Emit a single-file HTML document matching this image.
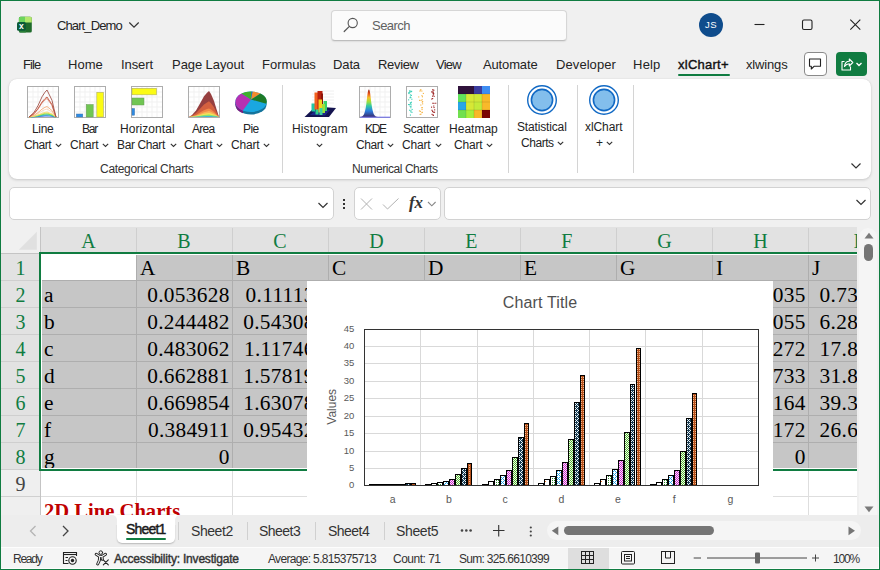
<!DOCTYPE html>
<html lang="en"><head><meta charset="utf-8"><title>Chart_Demo - Excel</title>
<style>
html,body{margin:0;padding:0}
body{width:880px;height:570px;overflow:hidden;background:#f0f0f0;font-family:"Liberation Sans",sans-serif;color:#242424}
#win{position:relative;width:880px;height:570px;overflow:hidden;background:#f0f0f0}
.t{position:absolute;white-space:nowrap}
.b{position:absolute;box-sizing:border-box}
svg{position:absolute;overflow:visible}

</style></head>
<body>
<div id="win">
<svg style="left:16px;top:16px" width="18" height="18" viewBox="0 0 18 18">
<rect x="2.900" y=".8" width="12.900" height="15.800" rx="1.600" fill="#1f6b2b"/>
<path d="M4.500 .8H9V6.400H2.900V2.400A1.600 1.600 0 0 1 4.500 .8Z" fill="#6cd45c"/>
<path d="M9 .8H14.200A1.600 1.600 0 0 1 15.800 2.400V6.400H9Z" fill="#b4e86e"/>
<path d="M2.900 13H9.800V16.600H4.500A1.600 1.600 0 0 1 2.900 15Z" fill="#2a8038"/>
<rect x="1" y="6" width="8.800" height="8.800" rx="1.500" fill="#0b5a38"/>
<text x="5.400" y="13.100" font-size="8.500" font-weight="700" fill="#fff" text-anchor="middle" font-family="Liberation Sans, sans-serif">x</text>
</svg>
<span id="t1" class="t " style="left:57.05px;top:19.00px;font-size:13px;line-height:13px;letter-spacing:-0.900px">Chart_Demo</span>
<svg style="left:128px;top:20px" width="12" height="10" viewBox="0 0 12 10"><path d="M1.300 2.500L6 7.200L10.700 2.500" fill="none" stroke="#333" stroke-width="1.200"/></svg>
<div class="b" style="left:330.5px;top:9.5px;width:236.5px;height:31px;background:#fbfbfb;border:1px solid #d6d6d6;border-bottom-color:#bdbdbd;border-radius:4px;box-shadow:0 1px 1.500px rgba(0,0,0,.08)"></div>
<svg style="left:343px;top:17px" width="16" height="16" viewBox="0 0 16 16"><circle cx="9.700" cy="6" r="4.600" fill="none" stroke="#555" stroke-width="1.100"/><path d="M6.400 9.300L1.200 14.500" stroke="#555" stroke-width="1.200" stroke-linecap="round"/></svg>
<span id="t2" class="t " style="left:372.05px;top:19.00px;font-size:13px;line-height:13px;color:#616161;letter-spacing:-0.540px">Search</span>
<div class="b" style="left:699px;top:13px;width:24px;height:24px;background:#0f4c8c;border-radius:50%"></div>
<span id="t3" class="t " style="left:705.00px;top:19.96px;font-size:9.5px;line-height:9.5px;color:#fff;letter-spacing:0.450px">JS</span>
<svg style="left:750px;top:15px" width="120" height="20" viewBox="0 0 120 20"><g fill="none" stroke="#222" stroke-width="1.100"><path d="M4.500 9.500H14.500"/><rect x="52.500" y="5" width="9.500" height="9.500" rx="1.500"/><path d="M100.300 4.700L110.300 14.700M110.300 4.700L100.300 14.700"/></g></svg>
<span id="t4" class="t " style="left:23.05px;top:58.00px;font-size:13px;line-height:13px;letter-spacing:-0.900px">File</span>
<span id="t5" class="t " style="left:68.05px;top:58.00px;font-size:13px;line-height:13px;letter-spacing:0.000px">Home</span>
<span id="t6" class="t " style="left:121.05px;top:58.00px;font-size:13px;line-height:13px;letter-spacing:-0.090px">Insert</span>
<span id="t7" class="t " style="left:172.10px;top:58.00px;font-size:13px;line-height:13px;letter-spacing:-0.090px">Page Layout</span>
<span id="t8" class="t " style="left:262.10px;top:58.00px;font-size:13px;line-height:13px;letter-spacing:-0.064px">Formulas</span>
<span id="t9" class="t " style="left:333.10px;top:58.00px;font-size:13px;line-height:13px;letter-spacing:-0.150px">Data</span>
<span id="t10" class="t " style="left:378.10px;top:58.00px;font-size:13px;line-height:13px;letter-spacing:-0.360px">Review</span>
<span id="t11" class="t " style="left:436.00px;top:58.00px;font-size:13px;line-height:13px;letter-spacing:-0.750px">View</span>
<span id="t12" class="t " style="left:482.95px;top:58.00px;font-size:13px;line-height:13px;letter-spacing:-0.129px">Automate</span>
<span id="t13" class="t " style="left:556.10px;top:58.00px;font-size:13px;line-height:13px;letter-spacing:0.056px">Developer</span>
<span id="t14" class="t " style="left:633.10px;top:58.00px;font-size:13px;line-height:13px;letter-spacing:0.150px">Help</span>
<span id="t15" class="t " style="left:678.00px;top:58.00px;font-size:13px;line-height:13px;color:#111;letter-spacing:0.257px;-webkit-text-stroke:.4px #111">xlChart+</span>
<div class="b" style="left:678px;top:73.5px;width:51.5px;height:2px;background:#107c41;border-radius:1px"></div>
<span id="t16" class="t " style="left:745.95px;top:58.00px;font-size:13px;line-height:13px;letter-spacing:-0.150px">xlwings</span>
<div class="b" style="left:803.5px;top:52px;width:23px;height:24px;background:#fff;border:1px solid #8a8a8a;border-radius:4px"></div>
<svg style="left:808px;top:57px" width="14" height="14" viewBox="0 0 14 14"><path d="M1.500 2H12.500V9.300H6L3.300 12V9.300H1.500Z" fill="none" stroke="#222" stroke-width="1.100" stroke-linejoin="round"/></svg>
<div class="b" style="left:835.5px;top:52px;width:31.5px;height:24px;background:#107c41;border-radius:4px"></div>
<svg style="left:839px;top:56px" width="26" height="16" viewBox="0 0 26 16"><g fill="none" stroke="#fff" stroke-width="1.100" stroke-linejoin="round"><path d="M5.500 5.500H3V14H11.500V10.500"/><path d="M5.500 10.500C5.800 7 8 5.300 10.300 5.300V3L13.800 6.500L10.300 10V7.700C8.500 7.700 6.800 8.500 5.500 10.500Z"/></g><path d="M17.500 7L20 9.500L22.500 7" fill="none" stroke="#fff" stroke-width="1.400"/></svg>
<div class="b" style="left:9px;top:79px;width:862px;height:100px;background:#fff;border-radius:8px;box-shadow:0 1px 3px rgba(0,0,0,.16),0 0 1px rgba(0,0,0,.12)"></div>
<div class="b" style="left:281.5px;top:85px;width:1px;height:88px;background:#d4d4d4"></div>
<div class="b" style="left:508px;top:85px;width:1px;height:88px;background:#d4d4d4"></div>
<div class="b" style="left:576.5px;top:85px;width:1px;height:88px;background:#d4d4d4"></div>
<div class="b" style="left:632.5px;top:85px;width:1px;height:88px;background:#d4d4d4"></div>
<svg style="left:27px;top:86px" width="32" height="32" viewBox="0 0 32 32"><rect x="0.500" y="0.500" width="31" height="31" fill="#fff" stroke="#adadad" stroke-width="1"/><path d="M6 1V31M11 1V31M16 1V31M21 1V31M26 1V31M1 6H31M1 11H31M1 16H31M1 21H31M1 26H31" stroke="#f1f1f1" stroke-width="1"/><g><polyline points="2.0,31.0 7.0,30.8 11.0,30.5 15.0,30.1 18.0,29.9 20.0,29.8 22.0,30.0 25.0,30.3 27.0,30.6 29.0,31.0" fill="none" stroke="#3b6fe0" stroke-width="1.1" stroke-linejoin="round"/><polyline points="2.0,31.0 7.0,30.6 11.0,30.1 15.0,29.4 18.0,29.0 20.0,28.8 22.0,29.1 25.0,29.6 27.0,30.3 29.0,31.0" fill="none" stroke="#2fb8c9" stroke-width="1" stroke-linejoin="round"/><polyline points="2.0,31.0 7.0,30.5 11.0,29.7 15.0,28.7 18.0,28.1 20.0,27.9 22.0,28.4 25.0,29.1 27.0,30.1 29.0,31.0" fill="none" stroke="#5fd36a" stroke-width="1" stroke-linejoin="round"/><polyline points="2.0,31.0 7.0,30.3 11.0,29.3 15.0,28.0 18.0,27.3 20.0,27.0 22.0,27.6 25.0,28.5 27.0,29.8 29.0,31.0" fill="none" stroke="#c5e04a" stroke-width="0.9" stroke-linejoin="round"/><polyline points="2.0,31.0 7.0,30.1 11.0,28.9 15.0,27.2 18.0,26.4 20.0,26.0 22.0,26.8 25.0,27.9 27.0,29.5 29.0,31.0" fill="none" stroke="#f9dc70" stroke-width="0.9" stroke-linejoin="round"/><polyline points="2.0,31.0 7.0,29.6 11.0,27.6 15.0,25.0 18.0,23.6 20.0,23.0 22.0,24.2 25.0,26.0 27.0,28.6 29.0,31.0" fill="none" stroke="#f9c49a" stroke-width="0.6" stroke-linejoin="round"/><polyline points="2.0,31.0 7.0,29.2 11.0,26.6 15.0,23.1 18.0,21.3 20.0,20.5 22.0,22.1 25.0,24.5 27.0,27.9 29.0,31.0" fill="none" stroke="#f5a46a" stroke-width="0.8" stroke-linejoin="round"/><polyline points="2.0,31.0 7.0,27.9 11.0,23.2 15.0,17.1 18.0,14.0 20.0,12.5 22.0,15.3 25.0,19.5 27.0,25.4 29.0,31.0" fill="none" stroke="#d4745a" stroke-width="0.7" stroke-linejoin="round"/><polyline points="2.0,31.0 7.0,27.6 11.0,22.6 15.0,16.0 18.0,12.6 20.0,11.0 22.0,14.0 25.0,18.6 27.0,25.0 29.0,31.0" fill="none" stroke="#c4543c" stroke-width="0.9" stroke-linejoin="round"/><polyline points="2.0,31.0 7.0,26.4 11.0,19.7 15.0,10.8 18.0,6.2 20.0,4.0 22.0,8.1 25.0,14.3 27.0,22.9 29.0,31.0" fill="none" stroke="#a0524a" stroke-width="0.9" stroke-linejoin="round"/></g></svg>
<svg style="left:74px;top:86px" width="32" height="32" viewBox="0 0 32 32"><rect x="0.500" y="0.500" width="31" height="31" fill="#fff" stroke="#adadad" stroke-width="1"/><path d="M6 1V31M11 1V31M16 1V31M21 1V31M26 1V31M1 6H31M1 11H31M1 16H31M1 21H31M1 26H31" stroke="#f1f1f1" stroke-width="1"/><rect x="2.300" y="28" width="6.500" height="3" fill="#2b8be6" stroke="#4a78a8" stroke-width=".5"/><rect x="12.200" y="18.500" width="7" height="12.500" fill="#70c653" stroke="#6a9a5a" stroke-width=".5"/><rect x="22.800" y="6.300" width="6.600" height="24.700" fill="#fbfb14" stroke="#b0b060" stroke-width=".6"/></svg>
<svg style="left:131px;top:86px" width="32" height="32" viewBox="0 0 32 32"><rect x="0.500" y="0.500" width="31" height="31" fill="#fff" stroke="#adadad" stroke-width="1"/><path d="M6 1V31M11 1V31M16 1V31M21 1V31M26 1V31M1 6H31M1 11H31M1 16H31M1 21H31M1 26H31" stroke="#f1f1f1" stroke-width="1"/><rect x="1" y="2.300" width="24.500" height="6.500" fill="#fbfb14" stroke="#b0b060" stroke-width=".6"/><rect x="1" y="12" width="12" height="7" fill="#70c653" stroke="#6a9a5a" stroke-width=".5"/><rect x="1" y="22.500" width="2.600" height="6.700" fill="#2b8be6" stroke="#4a78a8" stroke-width=".5"/></svg>
<svg style="left:188px;top:86px" width="32" height="32" viewBox="0 0 32 32"><rect x="0.500" y="0.500" width="31" height="31" fill="#fff" stroke="#adadad" stroke-width="1"/><path d="M6 1V31M11 1V31M16 1V31M21 1V31M26 1V31M1 6H31M1 11H31M1 16H31M1 21H31M1 26H31" stroke="#f1f1f1" stroke-width="1"/><polygon points="1.0,31.0 4.0,28.9 8.0,24.5 12.0,17.5 16.0,10.2 19.0,6.8 21.0,5.0 23.0,8.1 26.0,14.9 28.0,21.6 31.0,31.0" fill="#963f3f"/><polygon points="1.0,31.0 4.0,29.7 8.0,27.1 12.0,22.8 16.0,18.4 19.0,16.4 21.0,15.3 23.0,17.2 26.0,21.3 28.0,25.3 31.0,31.0" fill="#d4603f"/><polygon points="1.0,31.0 4.0,30.3 8.0,28.9 12.0,26.6 16.0,24.2 19.0,23.1 21.0,22.5 23.0,23.5 26.0,25.7 28.0,27.9 31.0,31.0" fill="#f28a4a"/><polygon points="1.0,31.0 4.0,30.5 8.0,29.5 12.0,27.9 16.0,26.2 19.0,25.4 21.0,25.0 23.0,25.7 26.0,27.3 28.0,28.8 31.0,31.0" fill="#f9b35a"/><polygon points="1.0,31.0 4.0,30.7 8.0,30.0 12.0,28.9 16.0,27.8 19.0,27.3 21.0,27.0 23.0,27.5 26.0,28.5 28.0,29.6 31.0,31.0" fill="#f3e45a"/><polygon points="1.0,31.0 4.0,30.8 8.0,30.4 12.0,29.8 16.0,29.1 19.0,28.8 21.0,28.6 23.0,28.9 26.0,29.5 28.0,30.1 31.0,31.0" fill="#8be06a"/><polygon points="1.0,31.0 4.0,30.9 8.0,30.8 12.0,30.5 16.0,30.2 19.0,30.1 21.0,30.0 23.0,30.1 26.0,30.4 28.0,30.6 31.0,31.0" fill="#3fb8d8"/></svg>
<svg style="left:234px;top:86px" width="34" height="32" viewBox="0 0 34 32">
<ellipse cx="17" cy="18.300" rx="15.600" ry="10.200" fill="#14749c"/>
<path d="M1.400 16V18.500A15.600 10.200 0 0 0 9 27.300V24.500Z" fill="#7a1d80"/>
<ellipse cx="17" cy="15.800" rx="15.600" ry="10.200" fill="#1aa7e0"/>
<path d="M17 13.500L8.800 24.400A15.600 10.200 0 0 1 7.500 7.600Z" fill="#b630b2"/>
<path d="M17 13.500L7.500 7.600A15.600 10.200 0 0 1 17.500 5.600Z" fill="#3fae2c"/>
<path d="M17 13.500L18.500 5.600A15.600 10.200 0 0 1 26.500 7.600Z" fill="#f28a2e"/>
<path d="M17 13.500L26.500 7.600A15.600 10.200 0 0 1 32.300 17.800Z" fill="#1d7a27"/>
<path d="M17 13.500L17.500 5.600L18.500 5.600Z" fill="#2d5fb0"/>
</svg>
<svg style="left:303px;top:86px" width="34" height="32" viewBox="0 0 34 32">
<path d="M9 8H31M9 11H31M9 14H31M9 17H31M10 5H31" stroke="#f0f0f0" stroke-width="1"/>
<polygon points="1.500,31 26,31 33,22 12.500,20.500" fill="#14144f"/>
<polygon points="7,29 22,29.500 27,24 14,23" fill="#2536b8" opacity=".55"/>
<rect x="8.500" y="17.500" width="3.500" height="8" fill="#22c7a8"/>
<rect x="12.500" y="20" width="3" height="8.500" fill="#2fd48a"/>
<rect x="20.500" y="15" width="3.500" height="10" fill="#39d06a"/>
<rect x="11.500" y="6.500" width="4.500" height="17" fill="#f2601e"/>
<rect x="14.500" y="5" width="5" height="18" fill="#b8200e"/>
<rect x="18" y="7.500" width="2" height="15" fill="#8e1408"/>
<rect x="15.500" y="13.500" width="3.500" height="13" fill="#f4d21e"/>
<rect x="19" y="18" width="3" height="9" fill="#9be03a"/>
<rect x="16.500" y="22" width="3" height="7" fill="#3fd0a0"/>
</svg>
<svg style="left:359px;top:86px" width="32" height="32" viewBox="0 0 32 32">
<defs><linearGradient id="kde" x1="0" y1="0" x2="0" y2="1"><stop offset="0" stop-color="#8c1a10"/><stop offset=".15" stop-color="#e8541a"/><stop offset=".3" stop-color="#f6c02a"/><stop offset=".45" stop-color="#9be03a"/><stop offset=".6" stop-color="#2fc8a8"/><stop offset=".78" stop-color="#2b7de0"/><stop offset="1" stop-color="#3a2a6a"/></linearGradient></defs>
<rect x="0.500" y="0.500" width="31" height="31" fill="#fff" stroke="#adadad" stroke-width="1"/><path d="M6 1V31M11 1V31M16 1V31M21 1V31M26 1V31M1 6H31M1 11H31M1 16H31M1 21H31M1 26H31" stroke="#f1f1f1" stroke-width="1"/><path d="M1 31C5 31 6 27 7.300 18C8.300 10 8.800 3.500 9.900 3.500C11 3.500 11.500 10 12.500 18C13.800 27 15 31 19 31Z" fill="url(#kde)"/><path d="M1 31.200H31" stroke="#6a6af0" stroke-width="1"/></svg>
<svg style="left:406px;top:86px" width="32" height="32" viewBox="0 0 32 32"><rect x="0.500" y="0.500" width="31" height="31" fill="#fff" stroke="#adadad" stroke-width="1"/><rect x="3.7" y="19.9" width="1.100" height="1.100" fill="#35cdb5"/><rect x="4.6" y="4.9" width="1.100" height="1.100" fill="#35cdb5"/><rect x="3.0" y="4.5" width="1.100" height="1.100" fill="#35cdb5"/><rect x="3.8" y="16.2" width="1.100" height="1.100" fill="#35cdb5"/><rect x="5.1" y="4.8" width="1.100" height="1.100" fill="#35cdb5"/><rect x="4.3" y="5.4" width="1.100" height="1.100" fill="#35cdb5"/><rect x="2.2" y="6.2" width="1.100" height="1.100" fill="#35cdb5"/><rect x="4.9" y="8.8" width="1.100" height="1.100" fill="#35cdb5"/><rect x="2.1" y="18.0" width="1.100" height="1.100" fill="#35cdb5"/><rect x="2.1" y="13.3" width="1.100" height="1.100" fill="#35cdb5"/><rect x="4.3" y="25.3" width="1.100" height="1.100" fill="#35cdb5"/><rect x="3.9" y="10.5" width="1.100" height="1.100" fill="#35cdb5"/><rect x="4.3" y="11.0" width="1.100" height="1.100" fill="#35cdb5"/><rect x="4.4" y="24.2" width="1.100" height="1.100" fill="#35cdb5"/><rect x="4.6" y="19.6" width="1.100" height="1.100" fill="#35cdb5"/><rect x="5.3" y="12.7" width="1.100" height="1.100" fill="#35cdb5"/><rect x="3.6" y="4.5" width="1.100" height="1.100" fill="#35cdb5"/><rect x="3.9" y="8.4" width="1.100" height="1.100" fill="#35cdb5"/><rect x="3.5" y="11.2" width="1.100" height="1.100" fill="#35cdb5"/><rect x="2.9" y="18.2" width="1.100" height="1.100" fill="#35cdb5"/><rect x="3.1" y="23.7" width="1.100" height="1.100" fill="#35cdb5"/><rect x="4.3" y="21.2" width="1.100" height="1.100" fill="#35cdb5"/><rect x="4.1" y="16.7" width="1.100" height="1.100" fill="#35cdb5"/><rect x="5.4" y="25.8" width="1.100" height="1.100" fill="#35cdb5"/><rect x="3.9" y="28.5" width="1.100" height="1.100" fill="#35cdb5"/><rect x="3.1" y="6.1" width="1.100" height="1.100" fill="#35cdb5"/><rect x="2.4" y="7.0" width="1.100" height="1.100" fill="#35cdb5"/><rect x="4.9" y="15.7" width="1.100" height="1.100" fill="#35cdb5"/><rect x="5.6" y="22.9" width="1.100" height="1.100" fill="#35cdb5"/><rect x="4.4" y="17.9" width="1.100" height="1.100" fill="#35cdb5"/><rect x="15.7" y="21.1" width="1.100" height="1.100" fill="#f5b342"/><rect x="14.3" y="18.5" width="1.100" height="1.100" fill="#f5b342"/><rect x="13.9" y="24.8" width="1.100" height="1.100" fill="#f5b342"/><rect x="14.4" y="27.6" width="1.100" height="1.100" fill="#f5b342"/><rect x="13.4" y="4.6" width="1.100" height="1.100" fill="#f5b342"/><rect x="15.3" y="21.2" width="1.100" height="1.100" fill="#f5b342"/><rect x="12.9" y="24.4" width="1.100" height="1.100" fill="#f5b342"/><rect x="12.2" y="10.4" width="1.100" height="1.100" fill="#f5b342"/><rect x="13.8" y="3.6" width="1.100" height="1.100" fill="#f5b342"/><rect x="16.1" y="15.0" width="1.100" height="1.100" fill="#f5b342"/><rect x="15.3" y="4.5" width="1.100" height="1.100" fill="#f5b342"/><rect x="15.5" y="23.0" width="1.100" height="1.100" fill="#f5b342"/><rect x="15.6" y="13.2" width="1.100" height="1.100" fill="#f5b342"/><rect x="15.6" y="25.7" width="1.100" height="1.100" fill="#f5b342"/><rect x="16.1" y="17.3" width="1.100" height="1.100" fill="#f5b342"/><rect x="15.6" y="26.0" width="1.100" height="1.100" fill="#f5b342"/><rect x="15.9" y="10.2" width="1.100" height="1.100" fill="#f5b342"/><rect x="13.0" y="13.8" width="1.100" height="1.100" fill="#f5b342"/><rect x="13.6" y="27.9" width="1.100" height="1.100" fill="#f5b342"/><rect x="16.8" y="6.9" width="1.100" height="1.100" fill="#f5b342"/><rect x="15.4" y="9.1" width="1.100" height="1.100" fill="#f5b342"/><rect x="15.7" y="15.6" width="1.100" height="1.100" fill="#f5b342"/><rect x="14.3" y="3.1" width="1.100" height="1.100" fill="#f5b342"/><rect x="14.5" y="13.9" width="1.100" height="1.100" fill="#f5b342"/><rect x="25.5" y="27.8" width="1.100" height="1.100" fill="#9e2424"/><rect x="27.5" y="21.0" width="1.100" height="1.100" fill="#9e2424"/><rect x="25.0" y="20.6" width="1.100" height="1.100" fill="#9e2424"/><rect x="26.4" y="4.4" width="1.100" height="1.100" fill="#9e2424"/><rect x="28.0" y="25.7" width="1.100" height="1.100" fill="#9e2424"/><rect x="25.4" y="23.7" width="1.100" height="1.100" fill="#9e2424"/><rect x="25.6" y="5.7" width="1.100" height="1.100" fill="#9e2424"/><rect x="27.2" y="19.5" width="1.100" height="1.100" fill="#9e2424"/><rect x="26.9" y="8.4" width="1.100" height="1.100" fill="#9e2424"/><rect x="26.7" y="7.2" width="1.100" height="1.100" fill="#9e2424"/><rect x="26.3" y="3.0" width="1.100" height="1.100" fill="#9e2424"/><rect x="26.8" y="6.9" width="1.100" height="1.100" fill="#9e2424"/><rect x="27.3" y="3.7" width="1.100" height="1.100" fill="#9e2424"/><rect x="27.1" y="25.7" width="1.100" height="1.100" fill="#9e2424"/><rect x="26.0" y="9.6" width="1.100" height="1.100" fill="#9e2424"/><rect x="26.1" y="12.0" width="1.100" height="1.100" fill="#9e2424"/><rect x="26.1" y="25.1" width="1.100" height="1.100" fill="#9e2424"/><rect x="26.9" y="28.8" width="1.100" height="1.100" fill="#9e2424"/><rect x="25.3" y="5.2" width="1.100" height="1.100" fill="#9e2424"/><rect x="26.8" y="5.7" width="1.100" height="1.100" fill="#9e2424"/><rect x="26.0" y="24.6" width="1.100" height="1.100" fill="#9e2424"/><rect x="27.2" y="7.2" width="1.100" height="1.100" fill="#9e2424"/><rect x="29.2" y="16.7" width="1.100" height="1.100" fill="#9e2424"/><rect x="26.9" y="6.8" width="1.100" height="1.100" fill="#9e2424"/><rect x="26.3" y="16.7" width="1.100" height="1.100" fill="#9e2424"/><rect x="26.4" y="28.4" width="1.100" height="1.100" fill="#9e2424"/><rect x="27.6" y="9.8" width="1.100" height="1.100" fill="#9e2424"/><rect x="25.2" y="12.5" width="1.100" height="1.100" fill="#9e2424"/><rect x="27.4" y="16.8" width="1.100" height="1.100" fill="#9e2424"/><rect x="28.1" y="23.3" width="1.100" height="1.100" fill="#9e2424"/></svg>
<svg style="left:458px;top:86px" width="32" height="32" viewBox="0 0 32 32"><rect x="0" y="0" width="8" height="8" fill="#30123b"/><rect x="8" y="0" width="8" height="8" fill="#30123b"/><rect x="16" y="0" width="8" height="8" fill="#3b3c9e"/><rect x="24" y="0" width="8" height="8" fill="#3e8df2"/><rect x="0" y="8" width="8" height="8" fill="#62e25c"/><rect x="8" y="8" width="8" height="8" fill="#d6e835"/><rect x="16" y="8" width="8" height="8" fill="#cfe838"/><rect x="24" y="8" width="8" height="8" fill="#f9b92a"/><rect x="0" y="16" width="8" height="8" fill="#27a6e6"/><rect x="8" y="16" width="8" height="8" fill="#d6e835"/><rect x="16" y="16" width="8" height="8" fill="#c4ea3a"/><rect x="24" y="16" width="8" height="8" fill="#f9b92a"/><rect x="0" y="24" width="8" height="8" fill="#70e04e"/><rect x="8" y="24" width="8" height="8" fill="#a6ef3a"/><rect x="16" y="24" width="8" height="8" fill="#f8b828"/><rect x="24" y="24" width="8" height="8" fill="#7a0403"/><path d="M8 8V32M16 8V32M24 8V32M0 8H32M0 16H32M0 24H32" stroke="rgba(0,0,0,.18)" stroke-width=".6"/></svg>
<svg style="left:526px;top:84px" width="32" height="32" viewBox="0 0 32 32"><circle cx="16" cy="16" r="14.300" fill="#fff" stroke="#1169c4" stroke-width="1.400"/><circle cx="16" cy="16" r="10.600" fill="#83beec" stroke="#1169c4" stroke-width="1.600"/></svg>
<svg style="left:588px;top:84px" width="32" height="32" viewBox="0 0 32 32"><circle cx="16" cy="16" r="14.300" fill="#fff" stroke="#1169c4" stroke-width="1.400"/><circle cx="16" cy="16" r="10.600" fill="#83beec" stroke="#1169c4" stroke-width="1.600"/></svg>
<span id="t17" class="t " style="left:32.05px;top:122.84px;font-size:12px;line-height:12px;letter-spacing:-0.375px">Line</span>
<span id="t18" class="t " style="left:23.99px;top:138.84px;font-size:12px;line-height:12px;letter-spacing:-0.450px">Chart</span>
<svg style="left:55px;top:143px" width="7" height="5" viewBox="0 0 7 5"><path d="M.8 .8L3.500 3.500L6.200 .8" fill="none" stroke="#333" stroke-width="1.100"/></svg>
<span id="t19" class="t " style="left:82.05px;top:122.84px;font-size:12px;line-height:12px;letter-spacing:-1.188px">Bar</span>
<span id="t20" class="t " style="left:70.05px;top:138.84px;font-size:12px;line-height:12px;letter-spacing:-0.225px">Chart</span>
<svg style="left:102px;top:143px" width="7" height="5" viewBox="0 0 7 5"><path d="M.8 .8L3.500 3.500L6.200 .8" fill="none" stroke="#333" stroke-width="1.100"/></svg>
<span id="t21" class="t " style="left:120.09px;top:122.84px;font-size:12px;line-height:12px;letter-spacing:0.050px">Horizontal</span>
<span id="t22" class="t " style="left:117.05px;top:138.84px;font-size:12px;line-height:12px;letter-spacing:-0.394px">Bar Chart</span>
<svg style="left:169.5px;top:143px" width="7" height="5" viewBox="0 0 7 5"><path d="M.8 .8L3.500 3.500L6.200 .8" fill="none" stroke="#333" stroke-width="1.100"/></svg>
<span id="t23" class="t " style="left:192.00px;top:122.84px;font-size:12px;line-height:12px;letter-spacing:-0.750px">Area</span>
<span id="t24" class="t " style="left:184.05px;top:138.84px;font-size:12px;line-height:12px;letter-spacing:-0.225px">Chart</span>
<svg style="left:216px;top:143px" width="7" height="5" viewBox="0 0 7 5"><path d="M.8 .8L3.500 3.500L6.200 .8" fill="none" stroke="#333" stroke-width="1.100"/></svg>
<span id="t25" class="t " style="left:243.01px;top:122.84px;font-size:12px;line-height:12px;letter-spacing:-0.564px">Pie</span>
<span id="t26" class="t " style="left:231.05px;top:138.84px;font-size:12px;line-height:12px;letter-spacing:-0.225px">Chart</span>
<svg style="left:263px;top:143px" width="7" height="5" viewBox="0 0 7 5"><path d="M.8 .8L3.500 3.500L6.200 .8" fill="none" stroke="#333" stroke-width="1.100"/></svg>
<span id="t27" class="t " style="left:292.05px;top:122.84px;font-size:12px;line-height:12px;letter-spacing:0.112px">Histogram</span>
<svg style="left:316px;top:143px" width="7" height="5" viewBox="0 0 7 5"><path d="M.8 .8L3.500 3.500L6.200 .8" fill="none" stroke="#333" stroke-width="1.100"/></svg>
<span id="t28" class="t " style="left:365.05px;top:122.84px;font-size:12px;line-height:12px;letter-spacing:-1.300px">KDE</span>
<span id="t29" class="t " style="left:355.99px;top:138.84px;font-size:12px;line-height:12px;letter-spacing:-0.450px">Chart</span>
<svg style="left:387px;top:143px" width="7" height="5" viewBox="0 0 7 5"><path d="M.8 .8L3.500 3.500L6.200 .8" fill="none" stroke="#333" stroke-width="1.100"/></svg>
<span id="t30" class="t " style="left:403.09px;top:122.84px;font-size:12px;line-height:12px;letter-spacing:-0.264px">Scatter</span>
<span id="t31" class="t " style="left:402.05px;top:138.84px;font-size:12px;line-height:12px;letter-spacing:-0.225px">Chart</span>
<svg style="left:434.5px;top:143px" width="7" height="5" viewBox="0 0 7 5"><path d="M.8 .8L3.500 3.500L6.200 .8" fill="none" stroke="#333" stroke-width="1.100"/></svg>
<span id="t32" class="t " style="left:449.05px;top:122.84px;font-size:12px;line-height:12px;letter-spacing:0.000px">Heatmap</span>
<span id="t33" class="t " style="left:454.05px;top:138.84px;font-size:12px;line-height:12px;letter-spacing:-0.225px">Chart</span>
<svg style="left:486px;top:143px" width="7" height="5" viewBox="0 0 7 5"><path d="M.8 .8L3.500 3.500L6.200 .8" fill="none" stroke="#333" stroke-width="1.100"/></svg>
<span id="t34" class="t " style="left:517.00px;top:120.84px;font-size:12px;line-height:12px;letter-spacing:-0.156px">Statistical</span>
<span id="t35" class="t " style="left:520.99px;top:136.84px;font-size:12px;line-height:12px;letter-spacing:-0.450px">Charts</span>
<svg style="left:557px;top:141px" width="7" height="5" viewBox="0 0 7 5"><path d="M.8 .8L3.500 3.500L6.200 .8" fill="none" stroke="#333" stroke-width="1.100"/></svg>
<span id="t36" class="t " style="left:585.00px;top:120.84px;font-size:12px;line-height:12px;letter-spacing:-0.075px">xlChart</span>
<span id="t37" class="t " style="left:595.99px;top:136.84px;font-size:12px;line-height:12px;letter-spacing:-1.300px">+</span>
<svg style="left:606px;top:141px" width="7" height="5" viewBox="0 0 7 5"><path d="M.8 .8L3.500 3.500L6.200 .8" fill="none" stroke="#333" stroke-width="1.100"/></svg>
<span id="t38" class="t " style="left:100.05px;top:162.84px;font-size:12px;line-height:12px;color:#333;letter-spacing:-0.331px">Categorical Charts</span>
<span id="t39" class="t " style="left:352.05px;top:162.84px;font-size:12px;line-height:12px;color:#333;letter-spacing:-0.450px">Numerical Charts</span>
<svg style="left:850px;top:160.500px" width="12" height="10" viewBox="0 0 12 10"><path d="M1.500 2.500L6 7L10.500 2.500" fill="none" stroke="#333" stroke-width="1.200"/></svg>
<div class="b" style="left:9px;top:187px;width:324.5px;height:33px;background:#fff;border:1px solid #d2d2d2;border-radius:5px"></div>
<svg style="left:317px;top:200px" width="12" height="10" viewBox="0 0 12 10"><path d="M1.500 3L6 7.500L10.500 3" fill="none" stroke="#333" stroke-width="1.200"/></svg>
<svg style="left:342px;top:198px" width="4" height="12" viewBox="0 0 4 12"><rect x="1" y="1" width="2" height="2" fill="#333"/><rect x="1" y="5" width="2" height="2" fill="#333"/><rect x="1" y="9" width="2" height="2" fill="#333"/></svg>
<div class="b" style="left:354px;top:187px;width:86.5px;height:33px;background:#fff;border:1px solid #d2d2d2;border-radius:5px"></div>
<svg style="left:358px;top:196px" width="80" height="16" viewBox="0 0 80 16"><g fill="none" stroke="#b2b2b2" stroke-width="1"><path d="M3 2.500L14 13.500M14 2.500L3 13.500"/><path d="M25 8.500L29.500 13L40.500 2.500"/></g><path d="M70 6L73.800 9.800L77.600 6" fill="none" stroke="#888" stroke-width="1.100"/></svg>
<span id="t40" class="t " style="left:408.95px;top:194.26px;font-size:17px;line-height:17px;color:#333;font-family:'Liberation Serif', serif;font-weight:700;letter-spacing:-0.056px"><i>fx</i></span>
<div class="b" style="left:444px;top:187px;width:427px;height:33px;background:#fff;border:1px solid #d2d2d2;border-radius:5px"></div>
<svg style="left:855px;top:197px" width="12" height="10" viewBox="0 0 12 10"><path d="M1.500 3L6 7.500L10.500 3" fill="none" stroke="#333" stroke-width="1.200"/></svg>
<div class="b" style="left:40px;top:227px;width:817px;height:25px;background:#e2e2e2"></div>
<div class="b" style="left:40px;top:227px;width:1px;height:25px;background:#c4c4c4"></div>
<div class="b" style="left:1px;top:253px;width:38px;height:217px;background:#e2e2e2"></div>
<div class="b" style="left:1px;top:253px;width:38px;height:1px;background:#c4c4c4"></div>
<div class="b" style="left:1px;top:470px;width:39px;height:46px;background:#efefef"></div>
<div class="b" style="left:40px;top:471px;width:1px;height:45px;background:#c4c4c4"></div>
<svg style="left:18px;top:231px" width="20" height="20" viewBox="0 0 20 20"><path d="M18.800 .8V18.800H.8Z" fill="#e0e0e0"/></svg>
<div class="b" style="left:41px;top:254px;width:816px;height:262px;background:#fff;overflow:hidden">
<div class="b" style="left:0;top:0;width:900px;height:216px;background:#c6c6c6"></div>
<div class="b" style="left:0;top:0;width:95px;height:26px;background:#fff"></div>
<div class="b" style="left:0;top:26px;width:900px;height:1px;background:#aeaeae"></div>
<div class="b" style="left:0;top:53px;width:900px;height:1px;background:#aeaeae"></div>
<div class="b" style="left:0;top:80px;width:900px;height:1px;background:#aeaeae"></div>
<div class="b" style="left:0;top:107px;width:900px;height:1px;background:#aeaeae"></div>
<div class="b" style="left:0;top:134px;width:900px;height:1px;background:#aeaeae"></div>
<div class="b" style="left:0;top:161px;width:900px;height:1px;background:#aeaeae"></div>
<div class="b" style="left:0;top:188px;width:900px;height:1px;background:#aeaeae"></div>
<div class="b" style="left:0;top:215px;width:900px;height:1px;background:#aeaeae"></div>
<div class="b" style="left:0;top:242px;width:900px;height:1px;background:#dedede"></div>
<div class="b" style="left:0;top:269px;width:900px;height:1px;background:#dedede"></div>
<div class="b" style="left:95px;top:0;width:1px;height:216px;background:#aeaeae"></div>
<div class="b" style="left:95px;top:216px;width:1px;height:60px;background:#dedede"></div>
<div class="b" style="left:191px;top:0;width:1px;height:216px;background:#aeaeae"></div>
<div class="b" style="left:191px;top:216px;width:1px;height:60px;background:#dedede"></div>
<div class="b" style="left:287px;top:0;width:1px;height:216px;background:#aeaeae"></div>
<div class="b" style="left:287px;top:216px;width:1px;height:60px;background:#dedede"></div>
<div class="b" style="left:383px;top:0;width:1px;height:216px;background:#aeaeae"></div>
<div class="b" style="left:383px;top:216px;width:1px;height:60px;background:#dedede"></div>
<div class="b" style="left:479px;top:0;width:1px;height:216px;background:#aeaeae"></div>
<div class="b" style="left:479px;top:216px;width:1px;height:60px;background:#dedede"></div>
<div class="b" style="left:575px;top:0;width:1px;height:216px;background:#aeaeae"></div>
<div class="b" style="left:575px;top:216px;width:1px;height:60px;background:#dedede"></div>
<div class="b" style="left:671px;top:0;width:1px;height:216px;background:#aeaeae"></div>
<div class="b" style="left:671px;top:216px;width:1px;height:60px;background:#dedede"></div>
<div class="b" style="left:767px;top:0;width:1px;height:216px;background:#aeaeae"></div>
<div class="b" style="left:767px;top:216px;width:1px;height:60px;background:#dedede"></div>
<div class="b" style="left:863px;top:0;width:1px;height:216px;background:#aeaeae"></div>
<div class="b" style="left:863px;top:216px;width:1px;height:60px;background:#dedede"></div>
</div>
<span id="t41" class="t " style="left:81.30px;top:230.75px;font-size:20px;line-height:20px;color:#107c41;font-family:'Liberation Serif', serif">A</span>
<div class="b" style="left:136px;top:228px;width:1px;height:25px;background:#cfcfcf"></div>
<span id="t42" class="t " style="left:177.30px;top:230.75px;font-size:20px;line-height:20px;color:#107c41;font-family:'Liberation Serif', serif">B</span>
<div class="b" style="left:232px;top:228px;width:1px;height:25px;background:#cfcfcf"></div>
<span id="t43" class="t " style="left:273.30px;top:230.75px;font-size:20px;line-height:20px;color:#107c41;font-family:'Liberation Serif', serif">C</span>
<div class="b" style="left:328px;top:228px;width:1px;height:25px;background:#cfcfcf"></div>
<span id="t44" class="t " style="left:369.30px;top:230.75px;font-size:20px;line-height:20px;color:#107c41;font-family:'Liberation Serif', serif">D</span>
<div class="b" style="left:424px;top:228px;width:1px;height:25px;background:#cfcfcf"></div>
<span id="t45" class="t " style="left:465.30px;top:230.75px;font-size:20px;line-height:20px;color:#107c41;font-family:'Liberation Serif', serif">E</span>
<div class="b" style="left:520px;top:228px;width:1px;height:25px;background:#cfcfcf"></div>
<span id="t46" class="t " style="left:561.30px;top:230.75px;font-size:20px;line-height:20px;color:#107c41;font-family:'Liberation Serif', serif">F</span>
<div class="b" style="left:616px;top:228px;width:1px;height:25px;background:#cfcfcf"></div>
<span id="t47" class="t " style="left:657.30px;top:230.75px;font-size:20px;line-height:20px;color:#107c41;font-family:'Liberation Serif', serif">G</span>
<div class="b" style="left:712px;top:228px;width:1px;height:25px;background:#cfcfcf"></div>
<span id="t48" class="t " style="left:753.30px;top:230.75px;font-size:20px;line-height:20px;color:#107c41;font-family:'Liberation Serif', serif">H</span>
<div class="b" style="left:808px;top:228px;width:1px;height:25px;background:#cfcfcf"></div>
<div class="b" style="left:809px;top:227px;width:48px;height:26px;overflow:hidden">
<span class="t" style="left:44.500px;top:1.500px;font-size:20px;line-height:24px;color:#107c41;font-family:'Liberation Serif', serif">I</span></div>
<span id="t49" class="t " style="left:15.50px;top:257.75px;font-size:20px;line-height:20px;color:#107c41;font-family:'Liberation Serif', serif">1</span>
<div class="b" style="left:1px;top:280px;width:39px;height:1px;background:#cfcfcf"></div>
<span id="t50" class="t " style="left:15.50px;top:284.75px;font-size:20px;line-height:20px;color:#107c41;font-family:'Liberation Serif', serif">2</span>
<div class="b" style="left:1px;top:307px;width:39px;height:1px;background:#cfcfcf"></div>
<span id="t51" class="t " style="left:15.50px;top:311.75px;font-size:20px;line-height:20px;color:#107c41;font-family:'Liberation Serif', serif">3</span>
<div class="b" style="left:1px;top:334px;width:39px;height:1px;background:#cfcfcf"></div>
<span id="t52" class="t " style="left:15.50px;top:338.75px;font-size:20px;line-height:20px;color:#107c41;font-family:'Liberation Serif', serif">4</span>
<div class="b" style="left:1px;top:361px;width:39px;height:1px;background:#cfcfcf"></div>
<span id="t53" class="t " style="left:15.50px;top:365.75px;font-size:20px;line-height:20px;color:#107c41;font-family:'Liberation Serif', serif">5</span>
<div class="b" style="left:1px;top:388px;width:39px;height:1px;background:#cfcfcf"></div>
<span id="t54" class="t " style="left:15.50px;top:392.75px;font-size:20px;line-height:20px;color:#107c41;font-family:'Liberation Serif', serif">6</span>
<div class="b" style="left:1px;top:415px;width:39px;height:1px;background:#cfcfcf"></div>
<span id="t55" class="t " style="left:15.50px;top:419.75px;font-size:20px;line-height:20px;color:#107c41;font-family:'Liberation Serif', serif">7</span>
<div class="b" style="left:1px;top:442px;width:39px;height:1px;background:#cfcfcf"></div>
<span id="t56" class="t " style="left:15.50px;top:446.75px;font-size:20px;line-height:20px;color:#107c41;font-family:'Liberation Serif', serif">8</span>
<div class="b" style="left:1px;top:469px;width:39px;height:1px;background:#cfcfcf"></div>
<span id="t57" class="t " style="left:15.50px;top:473.75px;font-size:20px;line-height:20px;color:#444;font-family:'Liberation Serif', serif">9</span>
<div class="b" style="left:1px;top:496px;width:39px;height:1px;background:#d0d0d0"></div>
<span id="t58" class="t " style="left:140.00px;top:258.14px;font-size:21.33px;line-height:21.33px;color:#000;font-family:'Liberation Serif', serif">A</span>
<span id="t59" class="t " style="left:236.00px;top:258.14px;font-size:21.33px;line-height:21.33px;color:#000;font-family:'Liberation Serif', serif">B</span>
<span id="t60" class="t " style="left:332.00px;top:258.14px;font-size:21.33px;line-height:21.33px;color:#000;font-family:'Liberation Serif', serif">C</span>
<span id="t61" class="t " style="left:428.00px;top:258.14px;font-size:21.33px;line-height:21.33px;color:#000;font-family:'Liberation Serif', serif">D</span>
<span id="t62" class="t " style="left:524.00px;top:258.14px;font-size:21.33px;line-height:21.33px;color:#000;font-family:'Liberation Serif', serif">E</span>
<span id="t63" class="t " style="left:620.00px;top:258.14px;font-size:21.33px;line-height:21.33px;color:#000;font-family:'Liberation Serif', serif">G</span>
<span id="t64" class="t " style="left:716.00px;top:258.14px;font-size:21.33px;line-height:21.33px;color:#000;font-family:'Liberation Serif', serif">I</span>
<span id="t65" class="t " style="left:44.00px;top:285.14px;font-size:21.33px;line-height:21.33px;color:#000;font-family:'Liberation Serif', serif">a</span>
<span id="t66" class="t " style="left:44.00px;top:312.14px;font-size:21.33px;line-height:21.33px;color:#000;font-family:'Liberation Serif', serif">b</span>
<span id="t67" class="t " style="left:44.00px;top:339.14px;font-size:21.33px;line-height:21.33px;color:#000;font-family:'Liberation Serif', serif">c</span>
<span id="t68" class="t " style="left:44.00px;top:366.14px;font-size:21.33px;line-height:21.33px;color:#000;font-family:'Liberation Serif', serif">d</span>
<span id="t69" class="t " style="left:44.00px;top:393.14px;font-size:21.33px;line-height:21.33px;color:#000;font-family:'Liberation Serif', serif">e</span>
<span id="t70" class="t " style="left:44.00px;top:420.14px;font-size:21.33px;line-height:21.33px;color:#000;font-family:'Liberation Serif', serif">f</span>
<span id="t71" class="t " style="left:44.00px;top:447.14px;font-size:21.33px;line-height:21.33px;color:#000;font-family:'Liberation Serif', serif">g</span>
<span id="t72" class="t " style="right:650.2px;top:285.14px;font-size:21.33px;line-height:21.33px;color:#000;font-family:'Liberation Serif', serif;letter-spacing:.33px">0.053628</span>
<span id="t73" class="t " style="right:554.2px;top:285.14px;font-size:21.33px;line-height:21.33px;color:#000;font-family:'Liberation Serif', serif;letter-spacing:.33px">0.111135</span>
<span id="t74" class="t " style="right:74.2px;top:285.14px;font-size:21.33px;line-height:21.33px;color:#000;font-family:'Liberation Serif', serif;letter-spacing:.33px">0.607035</span>
<span id="t75" class="t " style="right:650.2px;top:312.14px;font-size:21.33px;line-height:21.33px;color:#000;font-family:'Liberation Serif', serif;letter-spacing:.33px">0.244482</span>
<span id="t76" class="t " style="right:554.2px;top:312.14px;font-size:21.33px;line-height:21.33px;color:#000;font-family:'Liberation Serif', serif;letter-spacing:.33px">0.543083</span>
<span id="t77" class="t " style="right:74.2px;top:312.14px;font-size:21.33px;line-height:21.33px;color:#000;font-family:'Liberation Serif', serif;letter-spacing:.33px">4.996055</span>
<span id="t78" class="t " style="right:650.2px;top:339.14px;font-size:21.33px;line-height:21.33px;color:#000;font-family:'Liberation Serif', serif;letter-spacing:.33px">0.483062</span>
<span id="t79" class="t " style="right:554.2px;top:339.14px;font-size:21.33px;line-height:21.33px;color:#000;font-family:'Liberation Serif', serif;letter-spacing:.33px">1.117463</span>
<span id="t80" class="t " style="right:74.2px;top:339.14px;font-size:21.33px;line-height:21.33px;color:#000;font-family:'Liberation Serif', serif;letter-spacing:.33px">13.92272</span>
<span id="t81" class="t " style="right:650.2px;top:366.14px;font-size:21.33px;line-height:21.33px;color:#000;font-family:'Liberation Serif', serif;letter-spacing:.33px">0.662881</span>
<span id="t82" class="t " style="right:554.2px;top:366.14px;font-size:21.33px;line-height:21.33px;color:#000;font-family:'Liberation Serif', serif;letter-spacing:.33px">1.578192</span>
<span id="t83" class="t " style="right:74.2px;top:366.14px;font-size:21.33px;line-height:21.33px;color:#000;font-family:'Liberation Serif', serif;letter-spacing:.33px">23.78733</span>
<span id="t84" class="t " style="right:650.2px;top:393.14px;font-size:21.33px;line-height:21.33px;color:#000;font-family:'Liberation Serif', serif;letter-spacing:.33px">0.669854</span>
<span id="t85" class="t " style="right:554.2px;top:393.14px;font-size:21.33px;line-height:21.33px;color:#000;font-family:'Liberation Serif', serif;letter-spacing:.33px">1.630784</span>
<span id="t86" class="t " style="right:74.2px;top:393.14px;font-size:21.33px;line-height:21.33px;color:#000;font-family:'Liberation Serif', serif;letter-spacing:.33px">28.95164</span>
<span id="t87" class="t " style="right:650.2px;top:420.14px;font-size:21.33px;line-height:21.33px;color:#000;font-family:'Liberation Serif', serif;letter-spacing:.33px">0.384911</span>
<span id="t88" class="t " style="right:554.2px;top:420.14px;font-size:21.33px;line-height:21.33px;color:#000;font-family:'Liberation Serif', serif;letter-spacing:.33px">0.954327</span>
<span id="t89" class="t " style="right:74.2px;top:420.14px;font-size:21.33px;line-height:21.33px;color:#000;font-family:'Liberation Serif', serif;letter-spacing:.33px">19.23172</span>
<span id="t90" class="t " style="right:650.2px;top:447.14px;font-size:21.33px;line-height:21.33px;color:#000;font-family:'Liberation Serif', serif;letter-spacing:.33px">0</span>
<span id="t91" class="t " style="right:554.2px;top:447.14px;font-size:21.33px;line-height:21.33px;color:#000;font-family:'Liberation Serif', serif;letter-spacing:.33px">0</span>
<span id="t92" class="t " style="right:74.2px;top:447.14px;font-size:21.33px;line-height:21.33px;color:#000;font-family:'Liberation Serif', serif;letter-spacing:.33px">0</span>
<div class="b" style="left:809px;top:254px;width:48px;height:262px;overflow:hidden">
<span class="t" style="left:3px;top:2px;font-size:21.33px;line-height:24px;color:#000;font-family:'Liberation Serif', serif">J</span>
<span class="t" style="left:10.500px;top:29px;font-size:21.33px;line-height:24px;letter-spacing:.33px;color:#000;font-family:'Liberation Serif', serif">0.733915</span>
<span class="t" style="left:10.500px;top:56px;font-size:21.33px;line-height:24px;letter-spacing:.33px;color:#000;font-family:'Liberation Serif', serif">6.283185</span>
<span class="t" style="left:10.500px;top:83px;font-size:21.33px;line-height:24px;letter-spacing:.33px;color:#000;font-family:'Liberation Serif', serif">17.80972</span>
<span class="t" style="left:10.500px;top:110px;font-size:21.33px;line-height:24px;letter-spacing:.33px;color:#000;font-family:'Liberation Serif', serif">31.80863</span>
<span class="t" style="left:10.500px;top:137px;font-size:21.33px;line-height:24px;letter-spacing:.33px;color:#000;font-family:'Liberation Serif', serif">39.31496</span>
<span class="t" style="left:10.500px;top:164px;font-size:21.33px;line-height:24px;letter-spacing:.33px;color:#000;font-family:'Liberation Serif', serif">26.60753</span>
</div>
<div class="b" style="left:41px;top:497px;width:300px;height:19px;overflow:hidden"><span class="t" style="left:3px;top:1px;font-size:20.600px;line-height:26px;color:#c00000;font-weight:700;font-family:'Liberation Serif', serif">2D Line Charts</span></div>
<div class="b" style="left:0;top:0;width:857px;height:516px;overflow:hidden">
<div class="b" style="left:41px;top:254px;width:900px;height:215px;border:1px solid #fff"></div>
<div class="b" style="left:39px;top:252px;width:900px;height:219px;border:2px solid #107c41"></div>
</div>
<div class="b" style="left:0;top:0;width:880px;height:516px;overflow:hidden"><svg style="left:307px;top:281px" width="466" height="235" viewBox="307 281 466 235" font-family="Liberation Sans, sans-serif"><defs><pattern id="p1" width="2" height="2" patternUnits="userSpaceOnUse"><rect width="2" height="2" fill="#fff"/></pattern><pattern id="p2" width="4" height="4" patternUnits="userSpaceOnUse"><rect width="4" height="4" fill="#fff"/><rect x="1" y="1" width="1" height="1" fill="#f07828"/></pattern><pattern id="p3" width="2" height="2" patternUnits="userSpaceOnUse"><rect width="2" height="2" fill="#fff"/><rect x="0" y="0" width="1" height="1" fill="#2e8b2e"/></pattern><pattern id="p4" width="4" height="4" patternUnits="userSpaceOnUse"><rect width="4" height="4" fill="#fff"/><rect x="0" y="0" width="1" height="1" fill="#27a4e6"/><rect x="1" y="1" width="1" height="1" fill="#27a4e6"/><rect x="2" y="2" width="1" height="1" fill="#27a4e6"/><rect x="3" y="3" width="1" height="1" fill="#27a4e6"/><rect x="1" y="3" width="1" height="1" fill="#27a4e6"/><rect x="3" y="1" width="1" height="1" fill="#27a4e6"/></pattern><pattern id="p5" width="2" height="2" patternUnits="userSpaceOnUse"><rect width="2" height="2" fill="#fbe6fb"/><rect x="0" y="0" width="1" height="1" fill="#c92cc9"/><rect x="1" y="1" width="1" height="1" fill="#c92cc9"/></pattern><pattern id="p6" width="2" height="2" patternUnits="userSpaceOnUse"><rect width="2" height="2" fill="#f2fbec"/><rect x="0" y="0" width="1" height="1" fill="#55b435"/><rect x="1" y="1" width="1" height="1" fill="#55b435"/></pattern><pattern id="p7" width="4" height="4" patternUnits="userSpaceOnUse"><rect width="4" height="4" fill="#173a50"/><rect x="0" y="0" width="1" height="1" fill="#eaf3f8"/><rect x="1" y="1" width="1" height="1" fill="#eaf3f8"/><rect x="2" y="2" width="1" height="1" fill="#eaf3f8"/><rect x="3" y="3" width="1" height="1" fill="#eaf3f8"/><rect x="1" y="3" width="1" height="1" fill="#eaf3f8"/><rect x="3" y="1" width="1" height="1" fill="#eaf3f8"/></pattern><pattern id="p8" width="2" height="2" patternUnits="userSpaceOnUse"><rect width="2" height="2" fill="#b5501a"/><rect x="1" y="1" width="1" height="1" fill="#f0b890"/></pattern></defs><rect x="307" y="281" width="466" height="240" fill="#fff"/><path d="M420.5 329.5V485.5M477.5 329.5V485.5M533.5 329.5V485.5M589.5 329.5V485.5M645.5 329.5V485.5M702.5 329.5V485.5M364.5 346.5H758.5M364.5 363.5H758.5M364.5 381.5H758.5M364.5 398.5H758.5M364.5 416.5H758.5M364.5 433.5H758.5M364.5 451.5H758.5M364.5 468.5H758.5" stroke="#d9d9d9" stroke-width="1" fill="none" shape-rendering="crispEdges"/><g stroke="#000" stroke-width="1" shape-rendering="crispEdges"><rect x="369.5" y="484.5" width="5" height="1" fill="url(#p1)"/><rect x="375.5" y="484.5" width="5" height="1" fill="url(#p2)"/><rect x="381.5" y="484.5" width="5" height="1" fill="url(#p3)"/><rect x="387.5" y="484.5" width="5" height="1" fill="url(#p4)"/><rect x="393.5" y="484.5" width="5" height="1" fill="url(#p5)"/><rect x="399.5" y="484.5" width="5" height="1" fill="url(#p6)"/><rect x="405.5" y="483.5" width="5" height="2" fill="url(#p7)"/><rect x="411.5" y="483.5" width="4" height="2" fill="url(#p8)"/><rect x="425.5" y="484.5" width="5" height="1" fill="url(#p1)"/><rect x="431.5" y="483.5" width="5" height="2" fill="url(#p2)"/><rect x="437.5" y="482.5" width="5" height="3" fill="url(#p3)"/><rect x="443.5" y="481.5" width="5" height="4" fill="url(#p4)"/><rect x="449.5" y="479.5" width="5" height="6" fill="url(#p5)"/><rect x="455.5" y="474.5" width="5" height="11" fill="url(#p6)"/><rect x="461.5" y="468.5" width="5" height="17" fill="url(#p7)"/><rect x="467.5" y="463.5" width="4" height="22" fill="url(#p8)"/><rect x="482.5" y="484.5" width="5" height="1" fill="url(#p1)"/><rect x="488.5" y="481.5" width="5" height="4" fill="url(#p2)"/><rect x="494.5" y="479.5" width="5" height="6" fill="url(#p3)"/><rect x="500.5" y="475.5" width="5" height="10" fill="url(#p4)"/><rect x="506.5" y="470.5" width="5" height="15" fill="url(#p5)"/><rect x="512.5" y="457.5" width="5" height="28" fill="url(#p6)"/><rect x="518.5" y="437.5" width="5" height="48" fill="url(#p7)"/><rect x="524.5" y="423.5" width="4" height="62" fill="url(#p8)"/><rect x="538.5" y="483.5" width="5" height="2" fill="url(#p1)"/><rect x="544.5" y="479.5" width="5" height="6" fill="url(#p2)"/><rect x="550.5" y="476.5" width="5" height="9" fill="url(#p3)"/><rect x="556.5" y="470.5" width="5" height="15" fill="url(#p4)"/><rect x="562.5" y="462.5" width="5" height="23" fill="url(#p5)"/><rect x="568.5" y="439.5" width="5" height="46" fill="url(#p6)"/><rect x="574.5" y="402.5" width="5" height="83" fill="url(#p7)"/><rect x="580.5" y="375.5" width="4" height="110" fill="url(#p8)"/><rect x="594.5" y="483.5" width="5" height="2" fill="url(#p1)"/><rect x="600.5" y="479.5" width="5" height="6" fill="url(#p2)"/><rect x="606.5" y="475.5" width="5" height="10" fill="url(#p3)"/><rect x="612.5" y="469.5" width="5" height="16" fill="url(#p4)"/><rect x="618.5" y="460.5" width="5" height="25" fill="url(#p5)"/><rect x="624.5" y="432.5" width="5" height="53" fill="url(#p6)"/><rect x="630.5" y="384.5" width="4" height="101" fill="url(#p7)"/><rect x="636.5" y="348.5" width="4" height="137" fill="url(#p8)"/><rect x="650.5" y="484.5" width="5" height="1" fill="url(#p1)"/><rect x="656.5" y="482.5" width="5" height="3" fill="url(#p2)"/><rect x="662.5" y="479.5" width="5" height="6" fill="url(#p3)"/><rect x="668.5" y="475.5" width="5" height="10" fill="url(#p4)"/><rect x="674.5" y="470.5" width="5" height="15" fill="url(#p5)"/><rect x="680.5" y="451.5" width="5" height="34" fill="url(#p6)"/><rect x="686.5" y="418.5" width="5" height="67" fill="url(#p7)"/><rect x="692.5" y="393.5" width="4" height="92" fill="url(#p8)"/></g><rect x="364.5" y="329.5" width="394.0" height="156.0" fill="none" stroke="#333" stroke-width="1" shape-rendering="crispEdges"/><text x="354.300" y="488.3" font-size="9.500" fill="#595959" text-anchor="end">0</text><text x="354.300" y="471.3" font-size="9.500" fill="#595959" text-anchor="end">5</text><text x="354.300" y="454.3" font-size="9.500" fill="#595959" text-anchor="end">10</text><text x="354.300" y="436.3" font-size="9.500" fill="#595959" text-anchor="end">15</text><text x="354.300" y="419.3" font-size="9.500" fill="#595959" text-anchor="end">20</text><text x="354.300" y="401.3" font-size="9.500" fill="#595959" text-anchor="end">25</text><text x="354.300" y="384.3" font-size="9.500" fill="#595959" text-anchor="end">30</text><text x="354.300" y="366.3" font-size="9.500" fill="#595959" text-anchor="end">35</text><text x="354.300" y="349.3" font-size="9.500" fill="#595959" text-anchor="end">40</text><text x="354.300" y="332.3" font-size="9.500" fill="#595959" text-anchor="end">45</text><text x="392.6" y="502.500" font-size="10.500" fill="#595959" text-anchor="middle">a</text><text x="448.9" y="502.500" font-size="10.500" fill="#595959" text-anchor="middle">b</text><text x="505.2" y="502.500" font-size="10.500" fill="#595959" text-anchor="middle">c</text><text x="561.5" y="502.500" font-size="10.500" fill="#595959" text-anchor="middle">d</text><text x="617.8" y="502.500" font-size="10.500" fill="#595959" text-anchor="middle">e</text><text x="674.1" y="502.500" font-size="10.500" fill="#595959" text-anchor="middle">f</text><text x="730.4" y="502.500" font-size="10.500" fill="#595959" text-anchor="middle">g</text><text x="540.100" y="307.500" font-size="16" letter-spacing=".15" fill="#505050" text-anchor="middle">Chart Title</text><text transform="translate(335.800 406.800) rotate(-90)" font-size="12" fill="#595959" text-anchor="middle">Values</text><text x="563" y="523.600" font-size="12" fill="#595959" text-anchor="middle">Categories</text></svg></div>
<div class="b" style="left:859px;top:228px;width:18px;height:288px;background:#f5f5f5;border-radius:9px 9px 0 0"></div>
<svg style="left:864px;top:232px" width="10" height="7" viewBox="0 0 10 7"><path d="M.5 6.500L5 .8L9.500 6.500Z" fill="#7a7a7a"/></svg>
<div class="b" style="left:864px;top:243.5px;width:9px;height:17px;background:#757575;border-radius:4.500px"></div>
<svg style="left:864px;top:506px" width="10" height="7" viewBox="0 0 10 7"><path d="M.5 .5L5 6.200L9.500 .5Z" fill="#7a7a7a"/></svg>
<div class="b" style="left:1px;top:515px;width:878px;height:32px;background:#ededed"></div>
<svg style="left:26px;top:523px" width="48" height="16" viewBox="0 0 48 16"><path d="M9.500 3L4.500 8L9.500 13" fill="none" stroke="#b4b4b4" stroke-width="1.300"/><path d="M37 3L42 8L37 13" fill="none" stroke="#444" stroke-width="1.300"/></svg>
<div class="b" style="left:117px;top:515px;width:57.5px;height:28px;background:#fff;border-radius:0 0 5px 5px;box-shadow:0 .5px 1.500px rgba(0,0,0,.22)"></div>
<div class="b" style="left:111px;top:515px;width:70px;height:5px;background:#fff"></div>
<div class="b" style="left:100px;top:515px;width:17px;height:10px;background:#ededed;border-radius:0 5px 0 0"></div>
<div class="b" style="left:174.5px;top:515px;width:17px;height:10px;background:#ededed;border-radius:5px 0 0 0"></div>
<span id="t93" class="t " style="left:125.95px;top:522.15px;font-size:14px;line-height:14px;color:#1a1a1a;letter-spacing:-0.810px;-webkit-text-stroke:.45px #1a1a1a">Sheet1</span>
<div class="b" style="left:125.5px;top:538px;width:40.5px;height:2px;background:#107c41;border-radius:1px"></div>
<span id="t94" class="t " style="left:191.05px;top:523.65px;font-size:14px;line-height:14px;color:#333;letter-spacing:-0.450px">Sheet2</span>
<span id="t95" class="t " style="left:259.05px;top:523.65px;font-size:14px;line-height:14px;color:#333;letter-spacing:-0.540px">Sheet3</span>
<span id="t96" class="t " style="left:328.00px;top:523.65px;font-size:14px;line-height:14px;color:#333;letter-spacing:-0.540px">Sheet4</span>
<span id="t97" class="t " style="left:396.00px;top:523.65px;font-size:14px;line-height:14px;color:#333;letter-spacing:-0.360px">Sheet5</span>
<div class="b" style="left:178px;top:522px;width:1px;height:18px;background:#d0d0d0"></div>
<div class="b" style="left:246.5px;top:522px;width:1px;height:18px;background:#d0d0d0"></div>
<div class="b" style="left:314.5px;top:522px;width:1px;height:18px;background:#d0d0d0"></div>
<div class="b" style="left:383.5px;top:522px;width:1px;height:18px;background:#d0d0d0"></div>
<svg style="left:459px;top:524px" width="80" height="14" viewBox="0 0 80 14"><g fill="#444"><circle cx="3" cy="6.500" r="1.300"/><circle cx="7.300" cy="6.500" r="1.300"/><circle cx="11.600" cy="6.500" r="1.300"/><circle cx="71.800" cy="3.500" r="1.100"/><circle cx="71.800" cy="7.500" r="1.100"/><circle cx="71.800" cy="11.500" r="1.100"/></g><path d="M34 6.500H45.500M39.700 1V12.500" stroke="#333" stroke-width="1.100" fill="none"/></svg>
<div class="b" style="left:547px;top:521px;width:314px;height:19px;background:#f5f5f5;border-radius:9.500px"></div>
<svg style="left:551px;top:526px" width="8" height="10" viewBox="0 0 8 10"><path d="M7.300 .5L.8 4.800L7.300 9.200Z" fill="#757575"/></svg>
<div class="b" style="left:563.5px;top:526px;width:150px;height:9px;background:#757575;border-radius:4.500px"></div>
<svg style="left:848px;top:526px" width="8" height="10" viewBox="0 0 8 10"><path d="M.5 .5L7 4.800L.5 9.200Z" fill="#757575"/></svg>
<div class="b" style="left:1px;top:547px;width:878px;height:22px;background:#f5f5f5;border:1px solid #fdfdfd;border-left:none"></div>
<span id="t98" class="t " style="left:13.00px;top:552.84px;font-size:12px;line-height:12px;color:#333;letter-spacing:-1.237px">Ready</span>
<svg style="left:62px;top:550px" width="16" height="15" viewBox="0 0 16 15"><g fill="none" stroke="#222" stroke-width="1.100"><path d="M6.500 13.500H1.500V2.500H14.500V6"/><path d="M1.500 4.500H14.500"/><path d="M3.500 7.500H6M3.500 10.500H5.500" stroke-width="1.200"/><circle cx="10.500" cy="10.500" r="3.700"/><circle cx="10.500" cy="10.500" r="1.700" fill="#222" stroke="none"/></g></svg>
<svg style="left:94px;top:549px" width="16" height="17" viewBox="0 0 16 17"><g fill="none" stroke-linecap="round" stroke-linejoin="round"><path d="M2.200 5.300L5.700 7.500L5.300 11.500L3.700 15M11.500 5.300L8 7.500L8.300 10.300" stroke="#222" stroke-width="3"/><path d="M2.200 5.300L5.700 7.500L5.300 11.500L3.700 15M11.500 5.300L8 7.500L8.300 10.300M5.700 7.500H8" stroke="#f5f5f5" stroke-width="1.100"/><circle cx="6.800" cy="3.600" r="1.800" stroke="#222" stroke-width="1" fill="#f5f5f5"/><path d="M9.300 10.800L14.300 15.800M14.300 10.800L9.300 15.800" stroke="#222" stroke-width="1.100"/></g></svg>
<span id="t99" class="t " style="left:113.95px;top:552.84px;font-size:12px;line-height:12px;color:#333;letter-spacing:-0.198px;-webkit-text-stroke:.4px #333">Accessibility: Investigate</span>
<span id="t100" class="t " style="left:267.95px;top:552.84px;font-size:12px;line-height:12px;color:#333;letter-spacing:-0.663px">Average: 5.815375713</span>
<span id="t101" class="t " style="left:393.05px;top:552.84px;font-size:12px;line-height:12px;color:#333;letter-spacing:-0.507px">Count: 71</span>
<span id="t102" class="t " style="left:459.05px;top:552.84px;font-size:12px;line-height:12px;color:#333;letter-spacing:-0.720px">Sum: 325.6610399</span>
<div class="b" style="left:568px;top:548px;width:40.5px;height:20.5px;background:#dedede"></div>
<svg style="left:580px;top:550px" width="100" height="16" viewBox="0 0 100 16"><g fill="none" stroke="#222" stroke-width="1"><rect x="1.500" y="1.500" width="12" height="12"/><path d="M5.500 1.500V13.500M9.500 1.500V13.500M1.500 5.500H13.500M1.500 9.500H13.500"/><rect x="41.500" y="1.500" width="13" height="12.500" rx="1"/><rect x="44.500" y="4.500" width="7" height="6.500"/><path d="M46 6.500H50M46 8.500H50"/><rect x="81.500" y="1.500" width="13" height="12"/><path d="M85.500 1.500V8H90.500V1.500"/></g></svg>
<svg style="left:690px;top:550px" width="135" height="16" viewBox="0 0 135 16"><path d="M3.700 8H11M17 8H117M122 8H129M125.500 4.500V11.500" stroke="#444" stroke-width="1" fill="none"/><rect x="65" y="2.500" width="5" height="11" rx="1" fill="#666"/></svg>
<span id="t103" class="t " style="left:833.05px;top:552.84px;font-size:12px;line-height:12px;color:#333;letter-spacing:-1.200px">100%</span>
<div class="b" style="left:0px;top:0px;width:880px;height:570px;border:1px solid #107c41;border-top-width:1.500px"></div>
</div>
</body></html>
